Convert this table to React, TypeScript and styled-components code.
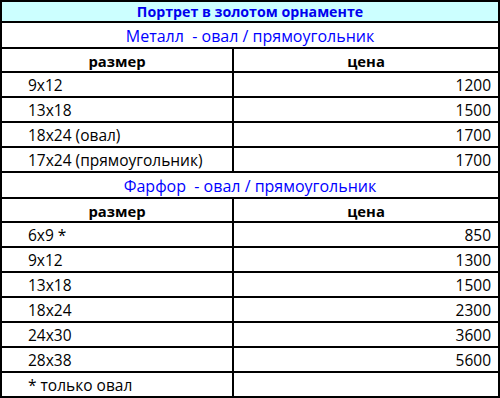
import React from 'react';
import styled, { createGlobalStyle } from 'styled-components';

interface Section {
  name: string;
  rows: { size: string; price?: string }[];
}

const sections: Section[] = [
  {
    name: 'Металл  - овал / прямоугольник',
    rows: [
      { size: '9x12', price: '1200' },
      { size: '13x18', price: '1500' },
      { size: '18x24 (овал)', price: '1700' },
      { size: '17x24 (прямоугольник)', price: '1700' },
    ],
  },
  {
    name: 'Фарфор  - овал / прямоугольник',
    rows: [
      { size: '6x9 *', price: '850' },
      { size: '9x12', price: '1300' },
      { size: '13x18', price: '1500' },
      { size: '18x24', price: '2300' },
      { size: '24x30', price: '3600' },
      { size: '28x38', price: '5600' },
      { size: '* только овал', price: '' },
    ],
  },
];

const GlobalStyle = createGlobalStyle`
  html, body {
    margin: 0;
    padding: 0;
    background: #fff;
  }
  body {
    font-family: 'Open Sans', 'Liberation Sans', sans-serif;
    color: #000;
  }
`;

const App: React.FC = () => {
  return (
    <>
      <GlobalStyle />
      <Table>
        <colgroup>
          <col style={{ width: 232 }} />
          <col />
        </colgroup>
        <tbody>
          <tr>
            <TitleCell colSpan={2}>Портрет в золотом орнаменте</TitleCell>
          </tr>
          {sections.map(section => (
            <React.Fragment key={section.name}>
              <tr>
                <SectionCell colSpan={2}>{section.name}</SectionCell>
              </tr>
              <tr>
                <HeadCell>размер</HeadCell>
                <HeadCell>цена</HeadCell>
              </tr>
              {section.rows.map(row => (
                <tr key={row.size}>
                  <SizeCell>{row.size}</SizeCell>
                  <PriceCell>{row.price}</PriceCell>
                </tr>
              ))}
            </React.Fragment>
          ))}
        </tbody>
      </Table>
    </>
  );
};

const Table = styled.table`
  width: 500px;
  height: 398px;
  border-collapse: collapse;
  table-layout: fixed;
  font-size: 15.5px;
  line-height: 1;

  td {
    border: 2px solid #000;
    padding: 3px 0 0;
    white-space: nowrap;
  }
`;

const TitleCell = styled.td`
  background-color: #ccffff;
  color: #0000ee;
  font-weight: bold;
  font-size: 14.2px;
  text-align: center;
  && {
    padding-top: 1px;
  }
`;

const SectionCell = styled.td`
  color: #0000ff;
  text-align: center;
  font-size: 16px;
  && {
    white-space: pre;
  }
`;

const HeadCell = styled.td`
  font-weight: bold;
  font-size: 14.8px;
  text-align: center;
`;

const SizeCell = styled.td`
  && {
    padding-left: 26px;
  }
`;

const PriceCell = styled.td`
  text-align: right;
  && {
    padding-right: 7px;
  }
`;

export default App;
